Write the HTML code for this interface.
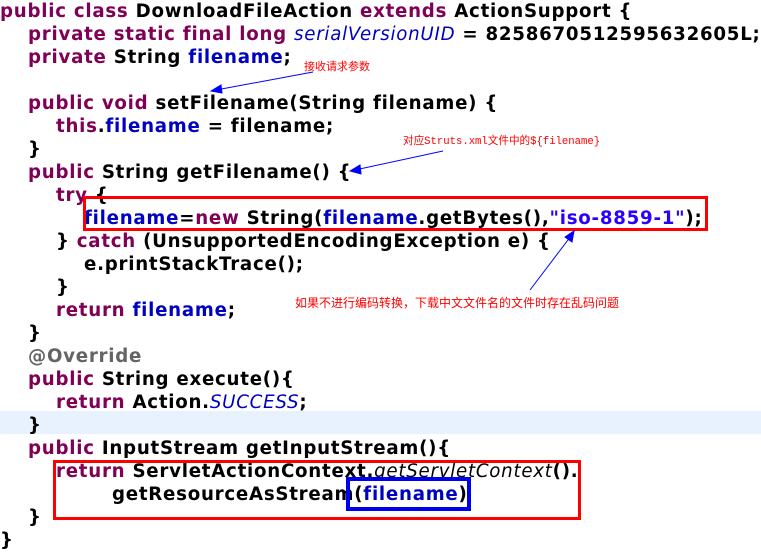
<!DOCTYPE html>
<html><head><meta charset="utf-8"><style>
body{margin:0;width:761px;height:554px;background:#fff;position:relative;overflow:hidden;font-family:"DejaVu Sans","Liberation Sans",sans-serif;font-weight:bold;font-size:18.2px;letter-spacing:0.75px;color:#000}
.l{position:absolute;left:0;height:23px;line-height:23px;white-space:pre}
.k{color:#7f0055}.f{color:#0000c0}.s{color:#2a00ff}.i{font-style:italic;font-weight:normal;color:#0000c0}.it{font-style:italic;font-weight:normal}
.ann{position:absolute;color:#f00;font-weight:normal;letter-spacing:0;font-size:11px;font-family:"Liberation Mono","Noto Sans CJK SC",monospace;white-space:pre}
.box{position:absolute;box-sizing:border-box}
</style></head><body>
<div style="position:absolute;left:0;top:411px;width:761px;height:23px;background:#e8f2fe"></div>
<div class="l" style="top:0;left:0"><span class="k">public class</span> DownloadFileAction <span class="k">extends</span> ActionSupport {</div>
<div class="l" style="top:23px;left:28px"><span class="k">private static final long</span> <span class="i">serialVersionUID</span> = 8258670512595632605L;</div>
<div class="l" style="top:46px;left:28px"><span class="k">private</span> String <span class="f">filename</span>;</div>
<div class="l" style="top:92px;left:28px"><span class="k">public void</span> setFilename(String filename) {</div>
<div class="l" style="top:115px;left:56px"><span class="k">this</span>.<span class="f">filename</span> = filename;</div>
<div class="l" style="top:138px;left:28px">}</div>
<div class="l" style="top:161px;left:28px"><span class="k">public</span> String getFilename() {</div>
<div class="l" style="top:184px;left:56px"><span class="k">try</span> {</div>
<div class="l" style="top:207px;left:84px"><span class="f">filename</span>=<span class="k">new</span> String(<span class="f">filename</span>.getBytes(),<span class="s">"iso-8859-1"</span>);</div>
<div class="l" style="top:230px;left:56px">} <span class="k">catch</span> (UnsupportedEncodingException e) {</div>
<div class="l" style="top:253px;left:84px">e.printStackTrace();</div>
<div class="l" style="top:276px;left:56px">}</div>
<div class="l" style="top:299px;left:56px"><span class="k">return</span> <span class="f">filename</span>;</div>
<div class="l" style="top:322px;left:28px">}</div>
<div class="l" style="top:345px;left:28px;color:#646464">@Override</div>
<div class="l" style="top:368px;left:28px"><span class="k">public</span> String execute(){</div>
<div class="l" style="top:391px;left:56px"><span class="k">return</span> Action.<span class="i">SUCCESS</span>;</div>
<div class="l" style="top:414px;left:28px">}</div>
<div class="l" style="top:437px;left:28px"><span class="k">public</span> InputStream getInputStream(){</div>
<div class="l" style="top:460px;left:56px"><span class="k">return</span> ServletActionContext.<span class="it">getServletContext</span>().</div>
<div class="l" style="top:483px;left:112px">getResourceAsStream(<span class="f">filename</span>)</div>
<div class="l" style="top:506px;left:28px">}</div>
<div class="l" style="top:529px;left:0">}</div>
<div class="box" style="left:83px;top:196px;width:625px;height:35px;border:3px solid #f00"></div>
<div class="box" style="left:53px;top:460px;width:528px;height:60px;border:3px solid #f00"></div>
<div class="box" style="left:346px;top:477px;width:125px;height:34px;border:4px solid #0000f0"></div>
<div class="ann" style="left:304px;top:58px">接收请求参数</div>
<div class="ann" style="left:403px;top:133px;font-size:10.6px">对应Struts.xml文件中的${filename}</div>
<div class="ann" style="left:295px;top:294px;font-size:12px">如果不进行编码转换，下载中文文件名的文件时存在乱码问题</div>
<svg style="position:absolute;left:0;top:0" width="761" height="554">
<g stroke="#0000ff" stroke-width="1" fill="#0000ff">
<line x1="313" y1="72" x2="216" y2="90"/><polygon points="211,91 221,85 222,93"/>
<line x1="443" y1="151" x2="355" y2="170"/><polygon points="350,171 360,165 361,174"/>
<line x1="530" y1="290" x2="571" y2="236"/><polygon points="574,231 572,242 565,237"/>
</g></svg>
</body></html>
